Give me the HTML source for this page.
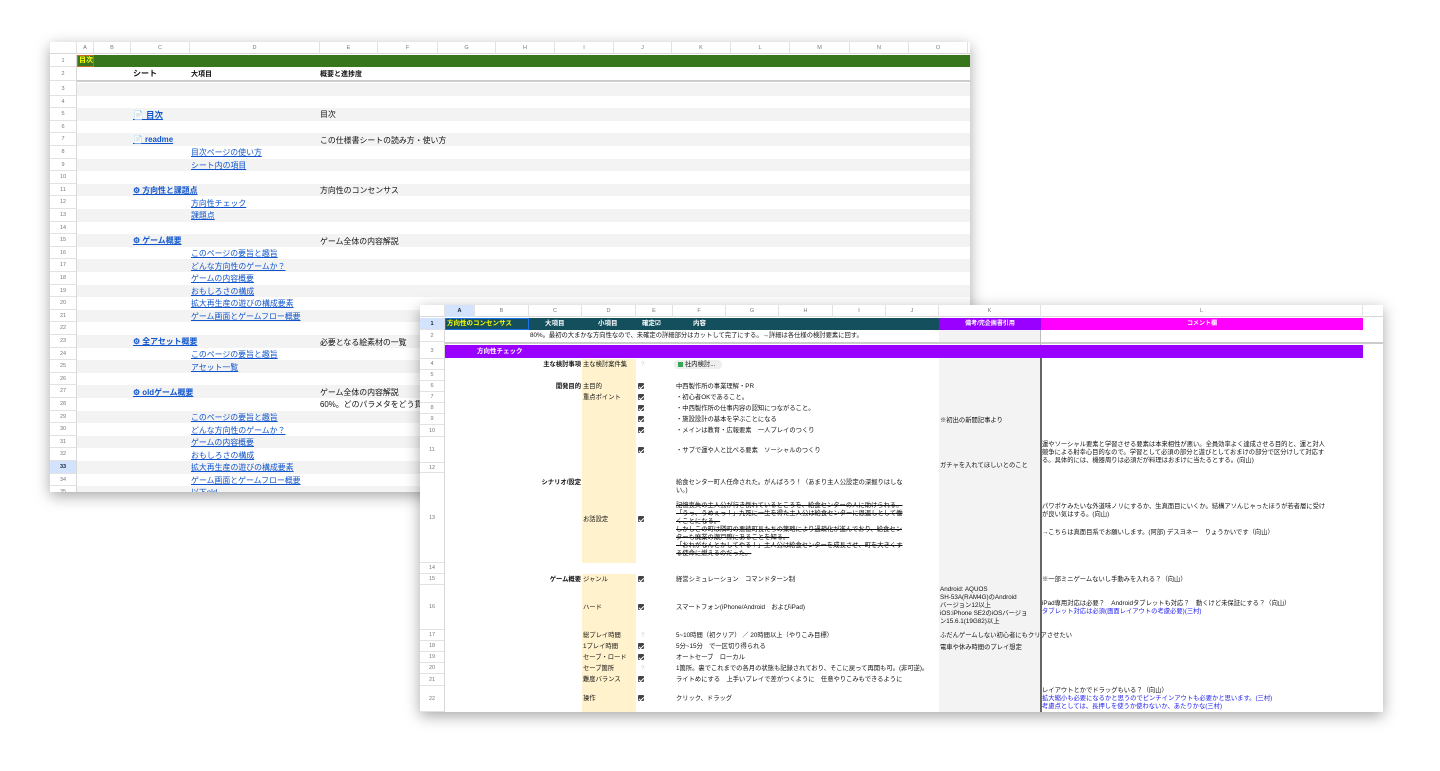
<!DOCTYPE html>
<html><head><meta charset="utf-8">
<style>
*{margin:0;padding:0;box-sizing:border-box}
body{width:1440px;height:771px;background:#fff;position:relative;overflow:hidden;font-family:"Liberation Sans","Noto Sans CJK JP",sans-serif;color:#111}
div{position:absolute}
.t{white-space:nowrap;line-height:10px}
.s1{font-size:7.9px}
.s2{font-size:6.3px;line-height:9px}
.lk{color:#1155cc;text-decoration:underline}
.b{font-weight:bold}
.ch{color:#777;font-size:5.5px;text-align:center;line-height:12px;top:0;height:12px;border-right:1px solid #e2e2e2}
.rn{color:#777;font-size:5.5px;text-align:center;border-bottom:1px solid #e2e2e2;background:#fff}
.cb{width:6px;height:6px;background:#444;border-radius:1px}
.cb:after{content:"";position:absolute;left:1.5px;top:0.5px;width:2px;height:3.5px;border:solid #fff;border-width:0 1px 1px 0;transform:rotate(45deg)}
.st{text-decoration:line-through}
.bl{color:#2222ee}
</style></head><body>

<!-- SHEET 1 -->
<div style="left:50px;top:42px;width:920px;height:450px;background:#fff;box-shadow:0 4px 14px rgba(0,0,0,.35);overflow:hidden">
 <div style="left:0;top:0;width:920px;height:12px;background:#fff;border-bottom:1px solid #d8d8d8"></div>
 <div class="ch" style="left:0;width:27px"></div>
 <div class="ch" style="left:27px;width:17px">A</div>
 <div class="ch" style="left:44px;width:37px">B</div>
 <div class="ch" style="left:81px;width:59px">C</div>
 <div class="ch" style="left:140px;width:130px">D</div>
 <div class="ch" style="left:270px;width:58px">E</div>
 <div class="ch" style="left:328px;width:60px">F</div>
 <div class="ch" style="left:388px;width:58px">G</div>
 <div class="ch" style="left:446px;width:59px">H</div>
 <div class="ch" style="left:505px;width:59px">I</div>
 <div class="ch" style="left:564px;width:58px">J</div>
 <div class="ch" style="left:622px;width:59px">K</div>
 <div class="ch" style="left:681px;width:59px">L</div>
 <div class="ch" style="left:740px;width:60px">M</div>
 <div class="ch" style="left:800px;width:59px">N</div>
 <div class="ch" style="left:859px;width:59px">O</div>
 <!-- row1 -->
 <div style="left:27px;top:13px;width:893px;height:12px;background:#38761d"></div>
 <div style="left:27px;top:13px;width:17px;height:12px;border:1.5px solid #c76b1e"></div>
 <div class="t b" style="left:29px;top:14px;font-size:7px;color:#ffff00">目次</div>
 <!-- row2 -->
 <div style="left:0;top:38px;width:920px;height:2px;background:#ccc"></div>
 <div class="t b" style="left:83px;top:27px;font-size:8px">シート</div>
 <div class="t b" style="left:141px;top:28px;font-size:7px">大項目</div>
 <div class="t b" style="left:270px;top:28px;font-size:7px">概要と進捗度</div>
 <!-- bands odd rows -->
 <div style="left:27px;top:41px;width:893px;height:12.6px;background:#f3f3f3"></div>
 <div style="left:27px;top:66.2px;width:893px;height:12.6px;background:#f3f3f3"></div>
 <div style="left:27px;top:91.4px;width:893px;height:12.6px;background:#f3f3f3"></div>
 <div style="left:27px;top:116.6px;width:893px;height:12.6px;background:#f3f3f3"></div>
 <div style="left:27px;top:141.8px;width:893px;height:12.6px;background:#f3f3f3"></div>
 <div style="left:27px;top:167px;width:893px;height:12.6px;background:#f3f3f3"></div>
 <div style="left:27px;top:192.2px;width:893px;height:12.6px;background:#f3f3f3"></div>
 <div style="left:27px;top:217.4px;width:893px;height:12.6px;background:#f3f3f3"></div>
 <div style="left:27px;top:242.6px;width:893px;height:12.6px;background:#f3f3f3"></div>
 <div style="left:27px;top:267.8px;width:893px;height:12.6px;background:#f3f3f3"></div>
 <div style="left:27px;top:293px;width:893px;height:12.6px;background:#f3f3f3"></div>
 <div style="left:27px;top:318.2px;width:893px;height:12.6px;background:#f3f3f3"></div>
 <div style="left:27px;top:343.4px;width:893px;height:12.6px;background:#f3f3f3"></div>
 <div style="left:27px;top:368.6px;width:893px;height:12.6px;background:#f3f3f3"></div>
 <div style="left:27px;top:393.8px;width:893px;height:12.6px;background:#f3f3f3"></div>
 <div style="left:27px;top:419px;width:893px;height:12.6px;background:#f3f3f3"></div>
 <div style="left:27px;top:444.2px;width:893px;height:12.6px;background:#f3f3f3"></div>
 <!-- row numbers -->
 <div style="left:0;top:13px;width:27px;height:440px;border-right:1px solid #d8d8d8;background:#fff"></div>
 <div class="rn t" style="left:0;top:13px;width:26px;height:12px;line-height:12px">1</div>
 <div class="rn t" style="left:0;top:25px;width:26px;height:14px;line-height:14px">2</div>
 <div class="rn t" style="left:0;top:41px;width:26px;height:12.6px;line-height:12px">3</div>
 <div class="rn t" style="left:0;top:53.6px;width:26px;height:12.6px;line-height:12px">4</div>
 <div class="rn t" style="left:0;top:66.2px;width:26px;height:12.6px;line-height:12px">5</div>
 <div class="rn t" style="left:0;top:78.8px;width:26px;height:12.6px;line-height:12px">6</div>
 <div class="rn t" style="left:0;top:91.4px;width:26px;height:12.6px;line-height:12px">7</div>
 <div class="rn t" style="left:0;top:104px;width:26px;height:12.6px;line-height:12px">8</div>
 <div class="rn t" style="left:0;top:116.6px;width:26px;height:12.6px;line-height:12px">9</div>
 <div class="rn t" style="left:0;top:129.2px;width:26px;height:12.6px;line-height:12px">10</div>
 <div class="rn t" style="left:0;top:141.8px;width:26px;height:12.6px;line-height:12px">11</div>
 <div class="rn t" style="left:0;top:154.4px;width:26px;height:12.6px;line-height:12px">12</div>
 <div class="rn t" style="left:0;top:167px;width:26px;height:12.6px;line-height:12px">13</div>
 <div class="rn t" style="left:0;top:179.6px;width:26px;height:12.6px;line-height:12px">14</div>
 <div class="rn t" style="left:0;top:192.2px;width:26px;height:12.6px;line-height:12px">15</div>
 <div class="rn t" style="left:0;top:204.8px;width:26px;height:12.6px;line-height:12px">16</div>
 <div class="rn t" style="left:0;top:217.4px;width:26px;height:12.6px;line-height:12px">17</div>
 <div class="rn t" style="left:0;top:230px;width:26px;height:12.6px;line-height:12px">18</div>
 <div class="rn t" style="left:0;top:242.6px;width:26px;height:12.6px;line-height:12px">19</div>
 <div class="rn t" style="left:0;top:255.2px;width:26px;height:12.6px;line-height:12px">20</div>
 <div class="rn t" style="left:0;top:267.8px;width:26px;height:12.6px;line-height:12px">21</div>
 <div class="rn t" style="left:0;top:280.4px;width:26px;height:12.6px;line-height:12px">22</div>
 <div class="rn t" style="left:0;top:293px;width:26px;height:12.6px;line-height:12px">23</div>
 <div class="rn t" style="left:0;top:305.6px;width:26px;height:12.6px;line-height:12px">24</div>
 <div class="rn t" style="left:0;top:318.2px;width:26px;height:12.6px;line-height:12px">25</div>
 <div class="rn t" style="left:0;top:330.8px;width:26px;height:12.6px;line-height:12px">26</div>
 <div class="rn t" style="left:0;top:343.4px;width:26px;height:12.6px;line-height:12px">27</div>
 <div class="rn t" style="left:0;top:356px;width:26px;height:12.6px;line-height:12px">28</div>
 <div class="rn t" style="left:0;top:368.6px;width:26px;height:12.6px;line-height:12px">29</div>
 <div class="rn t" style="left:0;top:381.2px;width:26px;height:12.6px;line-height:12px">30</div>
 <div class="rn t" style="left:0;top:393.8px;width:26px;height:12.6px;line-height:12px">31</div>
 <div class="rn t" style="left:0;top:406.4px;width:26px;height:12.6px;line-height:12px">32</div>
 <div class="rn t" style="left:0;top:419px;width:26px;height:12.6px;line-height:12px;background:#d3e3fd;color:#123;font-weight:bold">33</div>
 <div class="rn t" style="left:0;top:431.6px;width:26px;height:12.6px;line-height:12px">34</div>
 <div class="rn t" style="left:0;top:444.2px;width:26px;height:12.6px;line-height:12px">35</div>
 <!-- content -->
 <div class="t s1 b lk" style="left:83px;top:68px;font-size:8.5px">📄 目次</div><div class="t s1" style="left:270px;top:68px">目次</div>
 <div class="t s1 b lk" style="left:83px;top:93px">📄 readme</div><div class="t s1" style="left:270px;top:94px">この仕様書シートの読み方・使い方</div>
 <div class="t s1 lk" style="left:141px;top:106px">目次ページの使い方</div>
 <div class="t s1 lk" style="left:141px;top:119px">シート内の項目</div>
 <div class="t s1 b lk" style="left:83px;top:144px">⚙ 方向性と課題点</div><div class="t s1" style="left:270px;top:144px">方向性のコンセンサス</div>
 <div class="t s1 lk" style="left:141px;top:157px">方向性チェック</div>
 <div class="t s1 lk" style="left:141px;top:169px">課題点</div>
 <div class="t s1 b lk" style="left:83px;top:194px">⚙ ゲーム概要</div><div class="t s1" style="left:270px;top:195px">ゲーム全体の内容解説</div>
 <div class="t s1 lk" style="left:141px;top:207px">このページの要旨と趣旨</div>
 <div class="t s1 lk" style="left:141px;top:220px">どんな方向性のゲームか？</div>
 <div class="t s1 lk" style="left:141px;top:232px">ゲームの内容概要</div>
 <div class="t s1 lk" style="left:141px;top:245px">おもしろさの構成</div>
 <div class="t s1 lk" style="left:141px;top:257px">拡大再生産の遊びの構成要素</div>
 <div class="t s1 lk" style="left:141px;top:270px">ゲーム画面とゲームフロー概要</div>
 <div class="t s1 b lk" style="left:83px;top:295px">⚙ 全アセット概要</div><div class="t s1" style="left:270px;top:296px">必要となる絵素材の一覧</div>
 <div class="t s1 lk" style="left:141px;top:308px">このページの要旨と趣旨</div>
 <div class="t s1 lk" style="left:141px;top:321px">アセット一覧</div>
 <div class="t s1 b lk" style="left:83px;top:346px">⚙ oldゲーム概要</div><div class="t s1" style="left:270px;top:346px">ゲーム全体の内容解説</div>
 <div class="t s1" style="left:270px;top:358px">60%。どのパラメタをどう貫...</div>
 <div class="t s1 lk" style="left:141px;top:371px">このページの要旨と趣旨</div>
 <div class="t s1 lk" style="left:141px;top:384px">どんな方向性のゲームか？</div>
 <div class="t s1 lk" style="left:141px;top:396px">ゲームの内容概要</div>
 <div class="t s1 lk" style="left:141px;top:409px">おもしろさの構成</div>
 <div class="t s1 lk" style="left:141px;top:421px">拡大再生産の遊びの構成要素</div>
 <div class="t s1 lk" style="left:141px;top:434px">ゲーム画面とゲームフロー概要</div>
 <div class="t s1 lk" style="left:141px;top:446px">以下old</div>
</div>

<!-- SHEET 2 -->
<div style="left:420px;top:305px;width:963px;height:407px;background:#fff;box-shadow:0 4px 14px rgba(0,0,0,.35);overflow:hidden">
 <div style="left:0;top:0;width:963px;height:12px;border-bottom:1px solid #d8d8d8"></div>
 <div class="ch" style="left:0;width:25px"></div>
 <div class="ch" style="left:25px;width:30px;background:#d3e3fd;color:#123;font-weight:bold">A</div>
 <div class="ch" style="left:55px;width:54px">B</div>
 <div class="ch" style="left:109px;width:53px">C</div>
 <div class="ch" style="left:162px;width:54px">D</div>
 <div class="ch" style="left:216px;width:37px">E</div>
 <div class="ch" style="left:253px;width:53px">F</div>
 <div class="ch" style="left:306px;width:53px">G</div>
 <div class="ch" style="left:359px;width:54px">H</div>
 <div class="ch" style="left:413px;width:53px">I</div>
 <div class="ch" style="left:466px;width:53px">J</div>
 <div class="ch" style="left:519px;width:102px">K</div>
 <div class="ch" style="left:621px;width:322px">L</div>
 <!-- row1 -->
 <div style="left:109px;top:13px;width:410px;height:12px;background:#134f5c"></div>
 <div style="left:25px;top:13px;width:84px;height:12px;background:#134f5c;border:1.5px solid #1a73e8"></div>
 <div class="t b" style="left:27px;top:14px;font-size:6.5px;color:#ffff00">方向性のコンセンサス</div>
 <div class="t b" style="left:125px;top:14px;font-size:6.5px;color:#fff">大項目</div>
 <div class="t b" style="left:178px;top:14px;font-size:6.5px;color:#fff">小項目</div>
 <div class="t b" style="left:222px;top:14px;font-size:6.5px;color:#fff">確定☑</div>
 <div class="t b" style="left:273px;top:14px;font-size:6.5px;color:#fff">内容</div>
 <div style="left:519px;top:13px;width:102px;height:12px;background:#9900ff"></div>
 <div class="t b" style="left:519px;top:14px;width:102px;text-align:center;font-size:6px;color:#fff">備考/完企画書引用</div>
 <div style="left:621px;top:13px;width:322px;height:12px;background:#ff00ff"></div>
 <div class="t b" style="left:621px;top:14px;width:322px;text-align:center;font-size:6px;color:#fff">コメント欄</div>
 <!-- row2 -->
 <div class="t s2" style="left:110px;top:26px">80%。最初の大まかな方向性なので、未確定の詳細部分はカットして完了にする。→詳細は各仕様の検討要素に回す。</div>
 <div style="left:0;top:37px;width:963px;height:2px;background:#ccc"></div>
 <!-- K gray column -->
 <div style="left:519px;top:25px;width:102px;height:12px;background:#f3f3f3"></div>
 <div style="left:519px;top:53px;width:102px;height:360px;background:#f3f3f3"></div>
 <div style="left:620px;top:25px;width:1px;height:390px;background:#bbb"></div>
 <div style="left:620px;top:53px;width:1.5px;height:360px;background:#666"></div>
 <!-- row3 -->
 <div style="left:25px;top:40px;width:918px;height:13px;background:#9900ff"></div>
 <div class="t b" style="left:57px;top:42px;font-size:6.5px;color:#fff">方向性チェック</div>
 <!-- beige D -->
 <div style="left:162px;top:54px;width:54px;height:204px;background:#fff2cc"></div>
 <div style="left:162px;top:269px;width:54px;height:140px;background:#fff2cc"></div>
 <!-- row numbers -->
 <div style="left:0;top:13px;width:25px;height:400px;border-right:1px solid #d8d8d8;background:#fff"></div>
 <div class="rn t" style="left:0;top:13px;width:24px;height:12px;line-height:12px;background:#d3e3fd;color:#123;font-weight:bold">1</div>
 <div class="rn t" style="left:0;top:25px;width:24px;height:12px;line-height:12px">2</div>
 <div class="rn t" style="left:0;top:39px;width:24px;height:15px;line-height:15px">3</div>
 <div class="rn t" style="left:0;top:54px;width:24px;height:11px;line-height:11px">4</div>
 <div class="rn t" style="left:0;top:65px;width:24px;height:11px;line-height:11px">5</div>
 <div class="rn t" style="left:0;top:76px;width:24px;height:11px;line-height:11px">6</div>
 <div class="rn t" style="left:0;top:87px;width:24px;height:11px;line-height:11px">7</div>
 <div class="rn t" style="left:0;top:98px;width:24px;height:11px;line-height:11px">8</div>
 <div class="rn t" style="left:0;top:109px;width:24px;height:11px;line-height:11px">9</div>
 <div class="rn t" style="left:0;top:120px;width:24px;height:12px;line-height:12px">10</div>
 <div class="rn t" style="left:0;top:132px;width:24px;height:26px;line-height:26px">11</div>
 <div class="rn t" style="left:0;top:158px;width:24px;height:10px;line-height:10px">12</div>
 <div class="rn t" style="left:0;top:168px;width:24px;height:90px;line-height:90px">13</div>
 <div class="rn t" style="left:0;top:258px;width:24px;height:11px;line-height:11px">14</div>
 <div class="rn t" style="left:0;top:269px;width:24px;height:11px;line-height:11px">15</div>
 <div class="rn t" style="left:0;top:280px;width:24px;height:45px;line-height:45px">16</div>
 <div class="rn t" style="left:0;top:325px;width:24px;height:11px;line-height:11px">17</div>
 <div class="rn t" style="left:0;top:336px;width:24px;height:11px;line-height:11px">18</div>
 <div class="rn t" style="left:0;top:347px;width:24px;height:11px;line-height:11px">19</div>
 <div class="rn t" style="left:0;top:358px;width:24px;height:11px;line-height:11px">20</div>
 <div class="rn t" style="left:0;top:369px;width:24px;height:12px;line-height:12px">21</div>
 <div class="rn t" style="left:0;top:381px;width:24px;height:26px;line-height:26px">22</div>
 <!-- row4 -->
 <div class="t s2 b" style="left:109px;top:55px;width:52px;text-align:right">主な検討事項</div>
 <div class="t s2" style="left:163px;top:55px">主な検討案件集</div>
 <div class="t s2" style="left:221px;top:55px;color:#ccc">?</div>
 <div style="left:254px;top:55px;width:48px;height:9px;background:#eee;border-radius:4px"></div>
 <div style="left:258px;top:57px;width:5px;height:5px;background:#34a853"></div>
 <div class="t s2" style="left:265px;top:55px">社内検討...</div>
 <!-- row6-11 -->
 <div class="t s2 b" style="left:109px;top:77px;width:52px;text-align:right">開発目的</div>
 <div class="t s2" style="left:163px;top:77px">主目的</div><div class="cb" style="left:218px;top:78px"></div>
 <div class="t s2" style="left:256px;top:77px">中西製作所の事業理解・PR</div>
 <div class="t s2" style="left:163px;top:88px">重点ポイント</div><div class="cb" style="left:218px;top:89px"></div>
 <div class="t s2" style="left:256px;top:88px">・初心者OKであること。</div>
 <div class="cb" style="left:218px;top:100px"></div>
 <div class="t s2" style="left:256px;top:99px">・中西製作所の仕事内容の認知につながること。</div>
 <div class="cb" style="left:218px;top:111px"></div>
 <div class="t s2" style="left:256px;top:110px">・施設設計の基本を学ぶことになる</div>
 <div class="t s2" style="left:520px;top:111px">※初出の新聞記事より</div>
 <div class="cb" style="left:218px;top:122px"></div>
 <div class="t s2" style="left:256px;top:121px">・メインは教育・広報要素　一人プレイのつくり</div>
 <div class="cb" style="left:218px;top:142px"></div>
 <div class="t s2" style="left:256px;top:141px">・サブで運や人と比べる要素　ソーシャルのつくり</div>
 <div class="t s2" style="left:520px;top:156px">ガチャを入れてほしいとのこと</div>
 <div class="t s2" style="left:622px;top:135px">運やソーシャル要素と学習させる要素は本来相性が悪い。全員効率よく達成させる目的と、運と対人</div>
 <div class="t s2" style="left:622px;top:143px">競争による射幸心目的なので。学習として必須の部分と遊びとしておまけの部分で区分けして対応す</div>
 <div class="t s2" style="left:622px;top:151px">る。具体的には、機器周りは必須だが料理はおまけに当たるとする。(向山)</div>
 <!-- row13 -->
 <div class="t s2 b" style="left:109px;top:173px;width:52px;text-align:right">シナリオ/設定</div>
 <div class="t s2" style="left:256px;top:173px">給食センター町人任命された。がんばろう！（あまり主人公設定の深掘りはしな</div>
 <div class="t s2" style="left:256px;top:181px">い。)</div>
 <div class="t s2 st" style="left:256px;top:196px">記憶喪失の主人公が行き倒れているところを、給食センターの人に助けられる。</div>
 <div class="t s2 st" style="left:256px;top:204px">「うっ、うめぇっ！」九死に一生を得た主人公は給食センターに恩返しとして働</div>
 <div class="t s2 st" style="left:256px;top:212px">くことになる。</div>
 <div class="t s2 st" style="left:256px;top:220px">しかしこの町は隣町の悪徳町長たちの策略により過疎化が進んでおり、給食セン</div>
 <div class="t s2 st" style="left:256px;top:228px">ターも廃業の瀬戸際にあることを知る。</div>
 <div class="t s2 st" style="left:256px;top:236px">「おれがなんとかしてやる！」主人公は給食センターを成長させ、町を大きくす</div>
 <div class="t s2 st" style="left:256px;top:244px">る使命に燃えるのだった。</div>
 <div class="t s2" style="left:163px;top:210px">お話設定</div><div class="cb" style="left:218px;top:211px"></div>
 <div class="t s2" style="left:622px;top:197px">パワポケみたいな外道味ノリにするか、生真面目にいくか。結構アソんじゃったほうが若者層に受け</div>
 <div class="t s2" style="left:622px;top:205px">が良い気はする。(向山)</div>
 <div class="t s2" style="left:622px;top:223px">→こちらは真面目系でお願いします。(阿部) デスヨネー　りょうかいです（向山）</div>
 <!-- row15 -->
 <div class="t s2 b" style="left:109px;top:270px;width:52px;text-align:right">ゲーム概要</div>
 <div class="t s2" style="left:163px;top:270px">ジャンル</div><div class="cb" style="left:218px;top:271px"></div>
 <div class="t s2" style="left:256px;top:270px">経営シミュレーション　コマンドターン制</div>
 <div class="t s2" style="left:622px;top:270px">※一部ミニゲームないし手動みを入れる？（向山）</div>
 <!-- row16 -->
 <div class="t s2" style="left:163px;top:298px">ハード</div><div class="cb" style="left:218px;top:299px"></div>
 <div class="t s2" style="left:256px;top:298px">スマートフォン(iPhone/Android　およびiPad)</div>
 <div class="t s2" style="left:520px;top:281px;line-height:8px">Android: AQUOS<br>SH-53A(RAM4G)のAndroid<br>バージョン12以上<br>iOS:iPhone SE2のiOSバージョ<br>ン15.6.1(19G82)以上</div>
 <div class="t s2" style="left:622px;top:294px">iPad専用対応は必要？　Androidタブレットも対応？　動くけど未保証にする？（向山）</div>
 <div class="t s2 bl" style="left:622px;top:302px">タブレット対応は必須(画面レイアウトの考慮必要)(三村)</div>
 <!-- 17-22 -->
 <div class="t s2" style="left:163px;top:326px">総プレイ時間</div><div class="t s2" style="left:221px;top:326px;color:#ccc">?</div>
 <div class="t s2" style="left:256px;top:326px">5~10時間（初クリア） ／ 20時間以上（やりこみ目標）</div>
 <div class="t s2" style="left:520px;top:326px">ふだんゲームしない初心者にもクリアさせたい</div>
 <div class="t s2" style="left:163px;top:337px">1プレイ時間</div><div class="cb" style="left:218px;top:338px"></div>
 <div class="t s2" style="left:256px;top:337px">5分~15分　で一区切り得られる</div>
 <div class="t s2" style="left:520px;top:338px">電車や休み時間のプレイ想定</div>
 <div class="t s2" style="left:163px;top:348px">セーブ・ロード</div><div class="cb" style="left:218px;top:349px"></div>
 <div class="t s2" style="left:256px;top:348px">オートセーブ　ローカル</div>
 <div class="t s2" style="left:163px;top:359px">セーブ箇所</div><div class="t s2" style="left:221px;top:359px;color:#ccc">?</div>
 <div class="t s2" style="left:256px;top:359px">1箇所。裏でこれまでの各月の状態も記録されており、そこに戻って再開も可。(非可逆)。</div>
 <div class="t s2" style="left:163px;top:370px">難度バランス</div><div class="cb" style="left:218px;top:371px"></div>
 <div class="t s2" style="left:256px;top:370px">ライトめにする　上手いプレイで差がつくように　任意やりこみもできるように</div>
 <div class="t s2" style="left:163px;top:389px">操作</div><div class="cb" style="left:218px;top:390px"></div>
 <div class="t s2" style="left:256px;top:389px">クリック、ドラッグ</div>
 <div class="t s2" style="left:622px;top:381px">レイアウトとかでドラッグもいる？（向山）</div>
 <div class="t s2 bl" style="left:622px;top:389px">拡大縮小も必要になるかと思うのでピンチインアウトも必要かと思います。(三村)</div>
 <div class="t s2 bl" style="left:622px;top:397px">考慮点としては、長押しを使うか使わないか、あたりかな(三村)</div>
</div>
</body></html>
